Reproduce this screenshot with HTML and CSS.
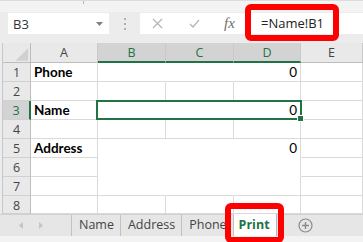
FILE: index.html
```html
<!DOCTYPE html>
<html lang="en">
<head>
    <meta charset="UTF-8">
    <meta name="viewport" content="width=device-width, initial-scale=1.0">
    <title>Print sheet</title>
    <link rel="stylesheet" href="styles.css">
</head>
<body>
    <div class="app">
        <div class="ribbon"><span class="ribbon-line"></span></div>

        <!-- Name box + formula bar -->
        <div class="formula-row">
            <div class="name-box">
                <span>B3</span>
                <svg class="drop" width="7" height="4" viewBox="0 0 7 4"><polygon points="0,0 7,0 3.5,4" fill="#808080"/></svg>
            </div>
            <div class="grip"><i></i><i></i><i></i></div>
            <div class="formula-bar">
                <span class="fb-btn cancel">
                    <svg width="11" height="11" viewBox="0 0 11 11"><path d="M1 1 L10 10 M10 1 L1 10" stroke="#b4b4b4" stroke-width="1.2" fill="none"/></svg>
                </span>
                <span class="fb-btn enter">
                    <svg width="11" height="9" viewBox="0 0 11 9"><path d="M1 5 L4 8 L10 1" stroke="#b4b4b4" stroke-width="1.2" fill="none"/></svg>
                </span>
                <span class="fb-btn fx">fx</span>
                <div class="formula-input">
                    <span>=Name!B1</span>
                    <div class="callout"></div>
                </div>
            </div>
        </div>

        <!-- Worksheet -->
        <div class="sheet">
            <div class="hd corner"><svg width="28" height="20" viewBox="0 0 28 20"><polygon points="26,5 26,18 13,18" fill="#d0d0d0"/></svg></div>
            <div class="hd col">A</div>
            <div class="hd col sel">B</div>
            <div class="hd col sel">C</div>
            <div class="hd col sel">D</div>
            <div class="hd col">E</div>

            <div class="hd row">1</div>
            <div class="cell bold">Phone</div>
            <div class="cell fill"></div>
            <div class="cell fill"></div>
            <div class="cell num">0</div>
            <div class="cell"></div>

            <div class="hd row">2</div>
            <div class="cell"></div>
            <div class="cell"></div>
            <div class="cell"></div>
            <div class="cell"></div>
            <div class="cell"></div>

            <div class="hd row sel">3</div>
            <div class="cell bold">Name</div>
            <div class="cell fill r3 cb"></div>
            <div class="cell fill r3 cc"></div>
            <div class="cell num r3 cd">0</div>
            <div class="cell"></div>

            <div class="hd row">4</div>
            <div class="cell"></div>
            <div class="cell"></div>
            <div class="cell"></div>
            <div class="cell"></div>
            <div class="cell"></div>

            <div class="hd row">5</div>
            <div class="cell bold">Address</div>
            <div class="cell fill open"></div>
            <div class="cell fill open"></div>
            <div class="cell num open">0</div>
            <div class="cell"></div>

            <div class="hd row">6</div>
            <div class="cell"></div>
            <div class="cell fill open"></div>
            <div class="cell fill open"></div>
            <div class="cell open"></div>
            <div class="cell"></div>

            <div class="hd row">7</div>
            <div class="cell"></div>
            <div class="cell fill"></div>
            <div class="cell fill"></div>
            <div class="cell"></div>
            <div class="cell"></div>

            <div class="hd row">8</div>
            <div class="cell"></div>
            <div class="cell"></div>
            <div class="cell"></div>
            <div class="cell"></div>
            <div class="cell"></div>

            <!-- selected range B3:D3 -->
            <div class="selection"></div>
        </div>

        <!-- Sheet tabs -->
        <div class="tabs">
            <div class="tab-nav">
                <svg width="4" height="7" viewBox="0 0 4 7"><polygon points="4,0 4,7 0,3.5" fill="#c4c4c4"/></svg>
                <svg width="4" height="7" viewBox="0 0 4 7"><polygon points="0,0 0,7 4,3.5" fill="#c4c4c4"/></svg>
            </div>
            <div class="tab">Name</div>
            <div class="tab">Address</div>
            <div class="tab">Phone</div>
            <div class="tab active">Print<div class="callout tab-callout"></div></div>
            <div class="add-sheet">
                <svg width="15" height="15" viewBox="0 0 15 15">
                    <circle cx="7.5" cy="7.5" r="6.5" stroke="#8a8a8a" stroke-width="1.2" fill="none"/>
                    <path d="M7.5 4 V11 M4 7.5 H11" stroke="#8a8a8a" stroke-width="1.4"/>
                </svg>
            </div>
        </div>
        <div class="status"></div>
    </div>
</body>
</html>
```

FILE: styles.css
```css
body {
    margin: 0;
    font-family: "Open Sans", "Liberation Sans", sans-serif;
    color: #262626;
}

.app {
    width: 363px;
    height: 242px;
    overflow: hidden;
    background: #ececec;
}

.ribbon {
    height: 12px;
    background: #f3f3f3;
    border-top: 1px solid #dcdcdc;
    box-sizing: border-box;
    padding-left: 83px;
}

.ribbon-line {
    display: block;
    width: 1px;
    height: 3px;
    background: #b8b8b8;
}

/* formula row */
.formula-row {
    display: flex;
    align-items: flex-start;
    height: 31px;
    padding-top: 1px;
    box-sizing: border-box;
    background: #ececec;
}

.name-box {
    display: flex;
    align-items: center;
    justify-content: space-between;
    margin-left: 8px;
    width: 101px;
    height: 21px;
    padding: 0 6px 0 5px;
    box-sizing: border-box;
    background: #fff;
    font-size: 13px;
    color: #333;
}

.grip {
    display: flex;
    flex-direction: column;
    justify-content: center;
    gap: 3px;
    width: 31px;
    height: 21px;
    align-items: center;
}

.grip i {
    display: block;
    width: 2px;
    height: 2px;
    background: #b0b0b0;
}

.formula-bar {
    flex: 1;
    display: flex;
    align-items: center;
    height: 21px;
    background: #fff;
}

.fb-btn {
    display: flex;
    align-items: center;
    justify-content: center;
    height: 21px;
}

.cancel { width: 34px; }
.enter { width: 40px; }

.fx {
    width: 31px;
    font-family: "Liberation Serif", serif;
    font-style: italic;
    font-size: 15px;
    color: #6e6e6e;
}

.formula-input {
    position: relative;
    flex: 1;
    height: 21px;
    line-height: 21px;
    padding-left: 16px;
    font-size: 13px;
    color: #222;
}

.callout {
    position: absolute;
    border: 6px solid #ff0000;
    border-radius: 6px;
    box-sizing: border-box;
}

.formula-input .callout {
    left: 0;
    top: -9px;
    width: 94px;
    height: 37px;
}

/* worksheet grid */
.sheet {
    display: grid;
    grid-template-columns: 28px 67px 68px 68px 67px 1fr;
    grid-template-rows: 20px repeat(7, 19px) 18px;
    margin-left: 2px;
    border-left: 1px solid #c8c8c8;
    background: #fff;
}

.hd {
    background: #e9e9e9;
    font-size: 12.5px;
    color: #444;
    display: flex;
    align-items: center;
    justify-content: center;
    box-sizing: border-box;
}

.hd.col {
    border-right: 1px solid #c9c9c9;
    border-bottom: 1px solid #bdbdbd;
}

.hd.row {
    border-right: 1px solid #bdbdbd;
    border-bottom: 1px solid #d0d0d0;
    padding-top: 1px;
}

.hd.corner {
    border-right: 1px solid #bdbdbd;
    border-bottom: 1px solid #bdbdbd;
    padding: 0;
}

.hd.corner svg {
    display: block;
}

.hd.sel {
    background: #d3d3d3;
    color: #217346;
}

.hd.col.sel {
    border-bottom: 2px solid #217346;
}

.hd.row.sel {
    border-right: 2px solid #217346;
}

.cell {
    border-right: 1px solid #dadada;
    border-bottom: 1px solid #dadada;
    box-sizing: border-box;
    font-family: "Lato", "Liberation Sans", sans-serif;
    font-size: 13.5px;
    line-height: 18px;
    padding: 0 3px;
    display: flex;
    align-items: flex-end;
    color: #000;
}

.cell.bold {
    font-weight: bold;
}

.cell.num {
    justify-content: flex-end;
}

.cell.fill {
    border-right-color: #fff;
}

.cell.open {
    border-bottom-color: #fff;
}

/* row 3 cells sit under the selection box */
.r3 { grid-row: 4; }
.cb { grid-column: 3; }
.cc { grid-column: 4; }
.cd { grid-column: 5; }

.selection {
    grid-column: 3 / 6;
    grid-row: 4;
    margin: -1px -1px 0 -2px;
    border: 2px solid #217346;
    position: relative;
}

.selection::after {
    content: "";
    position: absolute;
    right: -4px;
    bottom: -4px;
    width: 5px;
    height: 5px;
    background: #217346;
    border: 1px solid #fff;
}

/* sheet tabs */
.tabs {
    display: flex;
    align-items: stretch;
    height: 21px;
    background: #e6e6e6;
    border-top: 1px solid #d0d0d0;
    font-size: 12.5px;
    color: #444;
}

.tab-nav {
    display: flex;
    align-items: center;
    gap: 16px;
    width: 72px;
    padding-left: 19px;
    box-sizing: border-box;
    border-right: 1px solid #c2c2c2;
}

.tab {
    position: relative;
    display: flex;
    align-items: center;
    padding: 0 6px 0 7px;
    border-right: 1px solid #c2c2c2;
    line-height: 1;
}

.tab.active {
    background: #fff;
    color: #217346;
    font-weight: bold;
    padding: 0 6px 0 5px;
    margin-top: -1px;
    border-right: 1px solid #b8b8b8;
}

.tab-callout {
    left: -9px;
    top: -11px;
    width: 59px;
    height: 40px;
}

.add-sheet {
    display: flex;
    align-items: center;
    padding-left: 21px;
}

.add-sheet svg {
    display: block;
}

.status {
    height: 8px;
    background: #f3f3f3;
}
```
